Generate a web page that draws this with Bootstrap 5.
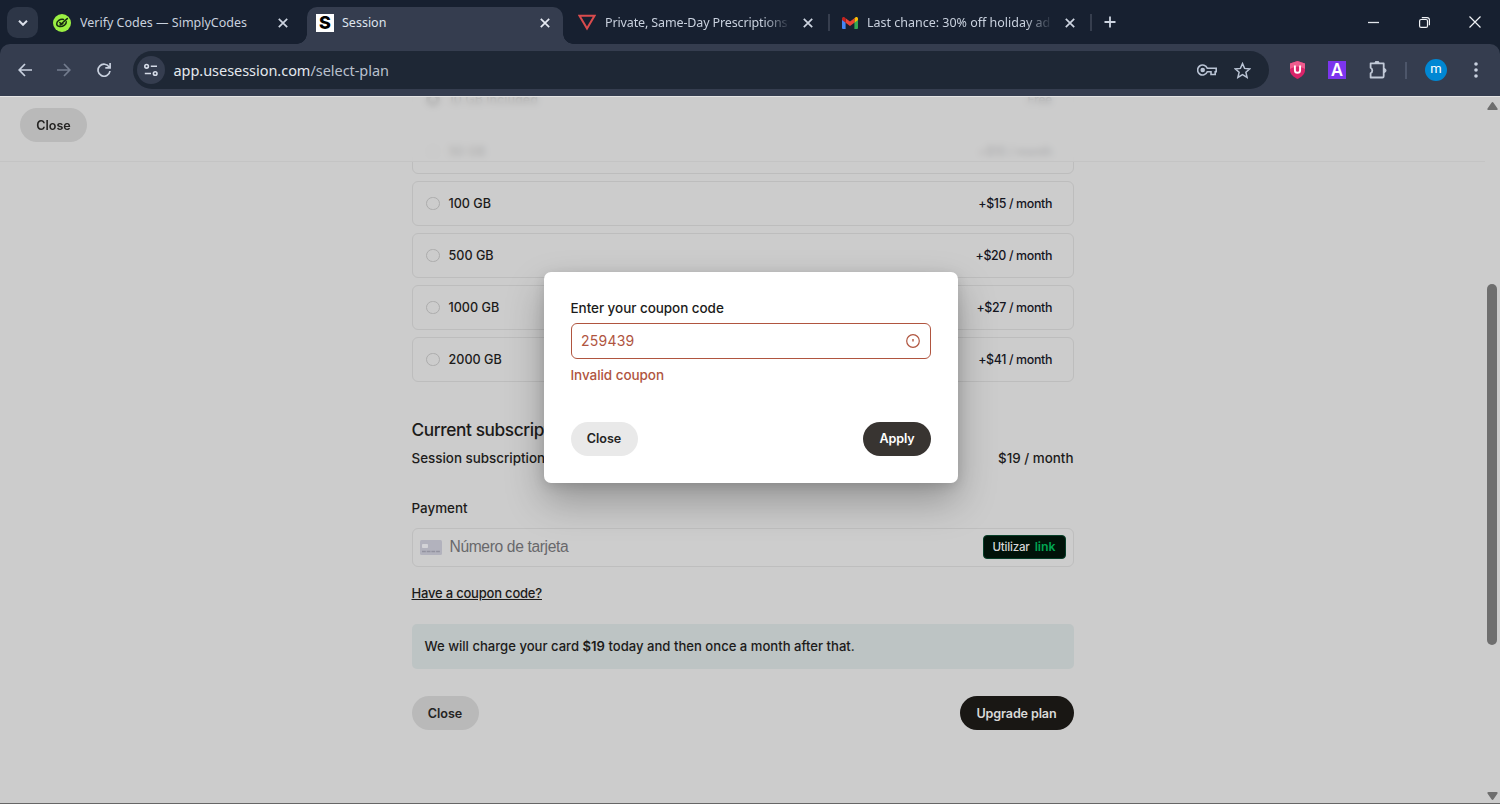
<!DOCTYPE html>
<html lang="en">
<head>
<meta charset="utf-8">
<title>Session</title>
<link href="https://cdn.jsdelivr.net/npm/bootstrap@5.3.0/dist/css/bootstrap.min.css" rel="stylesheet">
<style>
  :root { --strip:#172030; --bar:#353d4f; --omni:#1e2735; --page:#ccc; --ink:#1c1b1a; --err:#b0553f; }
  body { width:1500px; height:804px; overflow:hidden; background:var(--page); color:var(--ink); font:500 13.4px/20px Inter,"Liberation Sans",sans-serif; }
  svg { display:block; flex:none; }
  .strip { height:44px; background:var(--strip); color:#c9d1de; font:400 12.5px/20px "Noto Sans","Open Sans",sans-serif; }
  .tab-search { width:31px; height:31px; margin:7px 6px 0 7px; border-radius:10px; background:#2d3647; }
  .tabx { height:37px; margin-top:7px; padding-bottom:6px; position:relative; }
  .t-first { width:263px; padding-left:9px; }
  .t-session { width:256px; padding-left:9px; }
  .t-private { width:265px; padding-left:15px; }
  .t-mail { width:260px; padding-left:12px; }
  .tab-title { width:184px; margin-left:9px; padding-top:1px; white-space:nowrap; overflow:hidden; }
  .tab-fade { -webkit-mask-image:linear-gradient(90deg,#000 86%,transparent 101%); mask-image:linear-gradient(90deg,#000 86%,transparent 101%); }
  .tab-on { background:var(--bar); border-radius:10px 10px 0 0; color:#dfe4ee; }
  .tab-on::before,.tab-on::after { content:""; position:absolute; bottom:0; width:10px; height:10px; }
  .tab-on::before { left:-10px; background:radial-gradient(circle at 0 0,transparent 9.5px,var(--bar) 10px); }
  .tab-on::after { right:-10px; background:radial-gradient(circle at 100% 0,transparent 9.5px,var(--bar) 10px); }
  .tab-sep { width:2px; height:17px; margin-top:14px; background:#363e4e; }
  .fav-s { width:18px; height:18px; background:#fff; color:#000; font:800 18px/18px Inter,sans-serif; }
  .tool-wrap { background:var(--strip); }
  .toolbar-x { height:52px; background:var(--bar); border-radius:10px 10px 0 0; }
  .omni { width:1136px; height:38px; margin-top:7px; border-radius:19px; background:var(--omni); font:400 14.5px/20px "Noto Sans",sans-serif; letter-spacing:-.04px; color:#e3e7ee; }
  .site-chip { width:28px; height:28px; margin-left:4px; border-radius:50%; background:var(--bar); }
  .url-path { color:#b9c0cd; }
  .ext-a { width:18px; height:18px; background:#7c35ee; color:#fff; font:600 17px/18px "Noto Sans",sans-serif; }
  .avatar { width:22px; height:22px; border-radius:50%; background:#0087d3; color:#fff; font:400 13px/20px Roboto,sans-serif; }
  .ext-sep { width:2px; height:17px; margin-left:17px; background:#4d566a; }
  .view { height:708px; border-top:1px solid #e4e4e4; border-bottom:1px solid #666; overflow:hidden; }
  .col-main { width:662px; margin:-20px auto 0; }
  .plan { height:45px; margin-bottom:7px; padding:1px 20.5px 0 14px; border:1px solid #bdbdbd; border-radius:6px; font-size:12.6px; }
  .ring { width:13.5px; height:13.5px; margin:0 9px 1px -.5px; border:1px solid #acacac; border-radius:50%; }
  .ring-on { border:4px solid #333; }
  .price { color:#15161f; font-size:12.4px; letter-spacing:-.35px; }
  .topbar { left:0; top:0; width:1485px; height:65px; padding:11px 0 0 20px; background:rgba(204,204,204,.84); -webkit-backdrop-filter:blur(3px); backdrop-filter:blur(3px); border-bottom:1px solid #c4c4c4; }
  .pill { width:67px; height:34px; padding:0; border:0; border-radius:17px; font:600 12.6px/33px Inter,sans-serif; color:#252423; background:#b9b9b9; }
  .pill-dark { width:114px; background:#191714; color:#d9d9d8; letter-spacing:-.14px; }
  .pill-soft { background:#e9e9e9; }
  .pill-apply { width:68px; background:#383431; color:#fff; letter-spacing:-.1px; }
  .h-sub { font:500 17.3px/24px Inter,sans-serif; letter-spacing:-.4px; margin:36px 0 6px; }
  .card-field { height:39.5px; padding:0 7px; border:1px solid #bebebe; border-radius:6px; background:#cdcdcd; }
  .ph { margin-left:8px; color:#68686b; font:400 15.6px/20px "Liberation Sans",sans-serif; letter-spacing:-.35px; }
  .linkpay { width:83px; height:24px; border:1px solid #07402a; border-radius:4px; background:#001309; color:#d6d6d6; font-size:11.6px; letter-spacing:-.2px; }
  .linkpay b { margin-left:5px; color:#00a651; font-weight:600; font-size:12.3px; letter-spacing:0; }
  .coupon-link { font-size:13px; letter-spacing:-.2px; }
  .notice { height:45.5px; padding-left:13px; border-radius:5px; background:#bdc4c4; font-size:13.1px; }
  .scroller { width:15px; padding:5px 2px 3px 1px; }
  .thumb { width:10px; height:361px; margin-top:174px; border-radius:5px; background:#6e6e6e; }
  .dialog { left:544px; top:175px; width:414px; height:210.5px; padding:26px 27px 0 26.5px; background:#fff; border-radius:7px; box-shadow:0 18px 38px rgba(0,0,0,.27),0 3px 12px rgba(0,0,0,.13); font-size:13.5px; letter-spacing:-.06px; }
  .coupon { height:35.5px; margin:5px 0 6px; padding:0 10px 0 9.5px; border:1px solid var(--err); border-radius:6px; color:var(--err); font-size:14px; font-weight:400; letter-spacing:.22px; }
  .err-text { color:var(--err); margin-bottom:37px; }
</style>
</head>
<body>
<header>
  <div class="strip d-flex">
    <div class="tab-search d-flex align-items-center justify-content-center"><svg width="10" height="6" viewBox="0 0 10 6" fill="none" stroke="#dbe0ea" stroke-width="2"><path d="M1 .8l4 4 4-4"/></svg></div>
    <div class="tabx t-first d-flex align-items-center">
      <svg width="18" height="18" viewBox="0 0 18 18"><circle cx="9" cy="9" r="9" fill="#9bf043"/><g fill="none" stroke="#172b10" stroke-width="1.5" stroke-linecap="round"><path d="M10.500 5.500C7 4.800 3.600 7.300 3.700 10c.2 3 4.800 3.300 7.800 1.100 1.400-1.100 1.900-2.300 1.800-3.300"/><path d="M6.800 8.500l1.300 1.500L14.300 4.600M7 11l3-1.400"/></g></svg>
      <div class="tab-title me-3">Verify Codes — SimplyCodes</div>
      <svg width="10" height="10" viewBox="0 0 10 10" stroke="#cdd4e0" stroke-width="1.7" style="margin-left:-2px"><path d="M.8.8l8.400 8.400M9.200.8L.8 9.200"/></svg>
    </div>
    <div class="tabx t-session tab-on d-flex align-items-center">
      <span class="fav-s text-center">S</span>
      <div class="tab-title ms-2 me-3">Session</div>
      <svg width="10" height="10" viewBox="0 0 10 10" stroke="#e6eaf2" stroke-width="1.700" style="margin-left:-2px"><path d="M.8.8l8.400 8.400M9.200.8L.8 9.200"/></svg>
    </div>
    <div class="tabx t-private d-flex align-items-center">
      <svg width="18" height="17" viewBox="0 0 18 17" fill="none" stroke="#d94b4d" stroke-width="2"><path d="M1.500 1.800h15L9 14.500z"/></svg>
      <div class="tab-title tab-fade" style="letter-spacing:-.13px">Private, Same-Day Prescriptions</div>
      <svg style="margin-left:14px" width="10" height="10" viewBox="0 0 10 10" stroke="#cdd4e0" stroke-width="1.700"><path d="M.8.8l8.400 8.400M9.200.8L.8 9.200"/></svg>
    </div>
    <div class="tab-sep"></div>
    <div class="tabx t-mail d-flex align-items-center">
      <svg width="16" height="12" viewBox="0 0 16 12"><path d="M0 2v9a1 1 0 0 0 1 1h2.600V5z" fill="#4285f4"/><path d="M12.400 5v7H15a1 1 0 0 0 1-1V2z" fill="#34a853"/><path d="M12.400 1.200V5.800L16 3V1.600c0-1.500-1.600-2-2.700-1.200z" fill="#fbbc04"/><path d="M3.600 5.800V1.200L8 4.500l4.400-3.300v4.600L8 9.100z" fill="#ea4335"/><path d="M0 1.600V3l3.600 2.800V1.200L2.700.4C1.600-.4 0 .2 0 1.600z" fill="#c5221f"/></svg>
      <div class="tab-title tab-fade" style="letter-spacing:-.01px">Last chance: 30% off holiday ad</div>
      <svg style="margin-left:14px" width="10" height="10" viewBox="0 0 10 10" stroke="#cdd4e0" stroke-width="1.700"><path d="M.8.8l8.400 8.400M9.200.8L.8 9.200"/></svg>
    </div>
    <div class="tab-sep"></div>
    <div class="d-flex align-items-center flex-fill" style="padding:0 19px 0 12px">
      <svg width="12" height="12" viewBox="0 0 12 12" stroke="#cdd4e0" stroke-width="1.800"><path d="M6 .5v11M.5 6h11"/></svg>
      <svg class="ms-auto" width="11" height="11" viewBox="0 0 11 11" stroke="#e3e6ec" stroke-width="1.300"><path d="M0 5.500h11"/></svg>
      <svg style="margin:0 39px 0 40px" width="11" height="11" viewBox="0 0 11 11" fill="none" stroke="#f0f2f5" stroke-width="1.200"><rect x=".6" y="2.500" width="7.900" height="7.900" rx="1.500"/><path d="M2.800.6h5.400a2.200 2.200 0 0 1 2.200 2.200v5.400"/></svg>
      <svg width="12" height="12" viewBox="0 0 12 12" stroke="#f0f2f5" stroke-width="1.200"><path d="M.5.5l11 11M11.500.5l-11 11"/></svg>
    </div>
  </div>
  <div class="tool-wrap"><div class="toolbar-x d-flex">
    <div class="d-flex align-items-center" style="width:133px;padding-left:18px">
      <svg width="14" height="14" viewBox="0 0 14 14" fill="none" stroke="#c9d1df" stroke-width="1.700"><path d="M14 7H1.500M7 1L1.200 7 7 13"/></svg>
      <svg style="margin-left:25px" width="14" height="14" viewBox="0 0 14 14" fill="none" stroke="#737c8e" stroke-width="1.700"><path d="M0 7h12.500M7 1l5.800 6L7 13"/></svg>
      <svg style="margin-left:26px" width="14" height="14" viewBox="0 0 14 14" fill="none" stroke="#c9d1df" stroke-width="1.700"><path d="M12.300 4.300A6 6 0 1 0 13 8M13.100 0v4.800H8.300"/></svg>
    </div>
    <div class="omni d-flex align-items-center">
      <div class="site-chip d-flex align-items-center justify-content-center"><svg width="14" height="14" viewBox="0 0 14 14" fill="none" stroke="#d5dbe7" stroke-width="1.600"><circle cx="2.600" cy="3.300" r="1.800"/><path d="M6.800 3.300H13M.8 10.500H7"/><circle cx="11.200" cy="10.500" r="1.800"/></svg></div>
      <div style="margin-left:8.500px">app.usesession.com<span class="url-path">/select-plan</span></div>
      <svg class="ms-auto" width="20" height="12" viewBox="0 0 20 12" fill="none" stroke="#b9c3d4" stroke-width="1.600"><path d="M10.300 4.200A5 5 0 1 0 10.300 7.800H14v2.700h4.200V7.800h1V4.200z"/><circle cx="5.700" cy="6" r="1.500" fill="#b9c3d4"/></svg>
      <svg style="margin:0 18px 0 17px" width="17" height="17" viewBox="0 0 17 17" fill="none" stroke="#b9c3d4" stroke-width="1.500"><path d="M8.500 1.600l2.100 4.800 5.200.5-3.900 3.400 1.200 5.100-4.600-2.700-4.600 2.700 1.200-5.100L1.200 6.900l5.200-.5z"/></svg>
    </div>
    <div class="d-flex align-items-center flex-fill" style="padding-left:21px">
      <svg width="15" height="18" viewBox="0 0 15 18"><path d="M7.500 0L15 2.500v6.800c0 4-3.500 6.700-7.500 8.700C3.500 16 0 13.300 0 9.300V2.500z" fill="#d92469"/><path d="M7.500 0L15 2.500V8C10 4.500 5 4.500 0 8V2.500z" fill="#ee5c8e"/><path d="M4.900 4.500v4.700a2.600 2.600 0 0 0 5.200 0V4.500" fill="none" stroke="#fff" stroke-width="1.900"/></svg>
      <span class="ext-a text-center" style="margin-left:23px">A</span>
      <svg style="margin-left:22px" width="20" height="18" viewBox="0 0 20 18" fill="none" stroke="#c2cad8" stroke-width="1.800" stroke-linejoin="round"><path d="M2.600 2.400h13.100v12.800a1.300 1.300 0 0 1-1.300 1.300H2.600v-4.300a3 3 0 0 0 0-5.400z"/><path d="M7 2a2 2 0 0 1 4 0zM16 7.500a2 2 0 0 1 0 4z" fill="#c2cad8" stroke-width="1"/></svg>
      <div class="ext-sep"></div>
      <span class="avatar text-center" style="margin-left:18px">m</span>
      <svg style="margin-left:27px" width="4" height="16" viewBox="0 0 4 16" fill="#c9d1df"><circle cx="2" cy="2" r="1.800"/><circle cx="2" cy="8" r="1.800"/><circle cx="2" cy="14" r="1.800"/></svg>
    </div>
  </div></div>
</header>
<main class="view d-flex position-relative">
  <div class="flex-fill">
    <div class="col-main">
      <div class="plan d-flex align-items-center"><span class="ring ring-on"></span><span>10 GB included</span><span class="price ms-auto">Free</span></div>
      <div class="plan d-flex align-items-center"><span class="ring"></span><span>50 GB</span><span class="price ms-auto">+$10 / month</span></div>
      <div class="plan d-flex align-items-center"><span class="ring"></span><span>100 GB</span><span class="price ms-auto">+$15 / month</span></div>
      <div class="plan d-flex align-items-center"><span class="ring"></span><span>500 GB</span><span class="price ms-auto">+$20 / month</span></div>
      <div class="plan d-flex align-items-center"><span class="ring"></span><span>1000 GB</span><span class="price ms-auto">+$27 / month</span></div>
      <div class="plan d-flex align-items-center"><span class="ring"></span><span>2000 GB</span><span class="price ms-auto">+$41 / month</span></div>
      <h2 class="h-sub">Current subscription</h2>
      <div class="d-flex justify-content-between"><span>Session subscription</span><span>$19 / month</span></div>
      <div style="margin:29.500px 0 10px">Payment</div>
      <div class="card-field d-flex align-items-center">
        <svg width="22" height="15" viewBox="0 0 22 15"><rect width="22" height="15" rx="1.500" fill="#b2b2bd"/><rect x="2" y="4" width="6" height="4" rx=".8" fill="#d3d3d7"/><path d="M2 11.500h18" stroke="#92929f" stroke-width="1.500" stroke-dasharray="3.800 .9"/></svg>
        <span class="ph">Número de tarjeta</span>
        <span class="linkpay ms-auto d-flex align-items-center justify-content-center"><span>Utilizar</span><b>link</b></span>
      </div>
      <div style="margin:16px 0 20.500px"><span class="coupon-link text-decoration-underline">Have a coupon code?</span></div>
      <div class="notice d-flex align-items-center"><span>We will charge your card <b class="fw-semibold">$19</b> today and then once a month after that.</span></div>
      <div class="d-flex justify-content-between" style="margin-top:27px"><button class="pill">Close</button><button class="pill pill-dark">Upgrade plan</button></div>
    </div>
  </div>
  <div class="scroller d-flex flex-column align-items-center">
    <svg width="11" height="8" viewBox="0 0 11 8" fill="#6e6e6e"><path d="M4.500.8a1.200 1.200 0 0 1 2 0l4 5.700q.5 1.500-1 1.500h-8Q0 8 .5 6.500z"/></svg>
    <div class="thumb"></div>
    <svg class="mt-auto" width="11" height="8" viewBox="0 0 11 8" fill="#6e6e6e"><path d="M4.500 7.200a1.200 1.200 0 0 0 2 0l4-5.700Q11 0 9.500 0h-8Q0 0 .5 1.500z"/></svg>
  </div>
  <div class="topbar position-absolute"><button class="pill">Close</button></div>
  <section class="dialog position-absolute">
    <div>Enter your coupon code</div>
    <div class="coupon d-flex align-items-center justify-content-between"><span>259439</span><svg width="14" height="14" viewBox="0 0 14 14" fill="none" stroke="#b0553f" stroke-width="1.200"><circle cx="7" cy="7" r="6.300"/><path d="M7 5v2.500" stroke-width="1.400"/></svg></div>
    <div class="err-text">Invalid coupon</div>
    <div class="d-flex justify-content-between"><button class="pill pill-soft">Close</button><button class="pill pill-apply">Apply</button></div>
  </section>
</main>
<script src="https://cdn.jsdelivr.net/npm/bootstrap@5.3.0/dist/js/bootstrap.bundle.min.js"></script>
</body>
</html>
